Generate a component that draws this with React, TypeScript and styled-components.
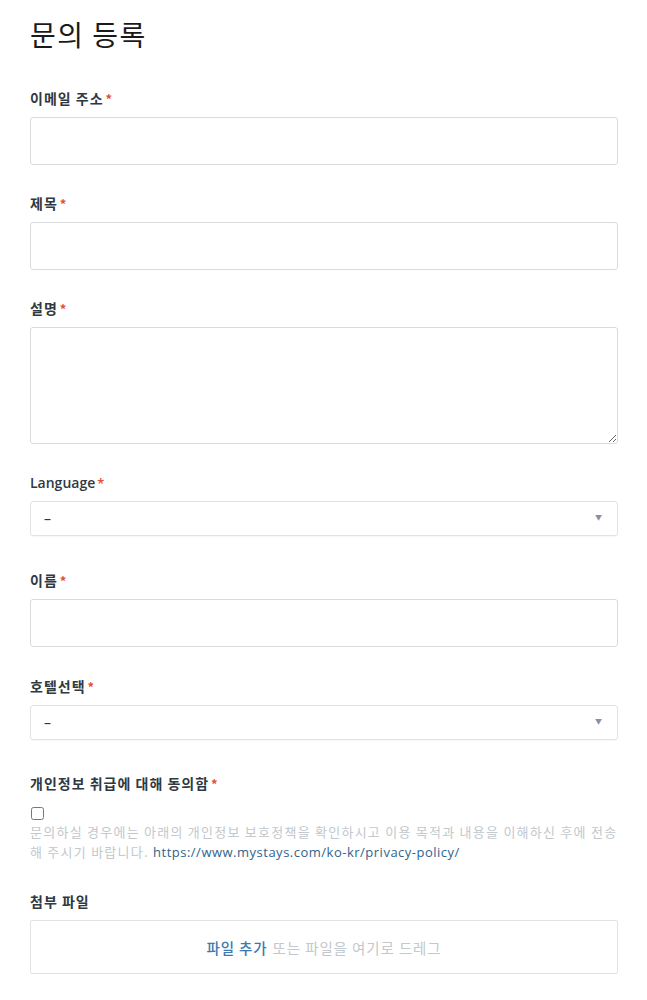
import React from "react";
import styled, { createGlobalStyle } from "styled-components";

const Global = createGlobalStyle`
  html, body { margin: 0; padding: 0; background: #fff; }
  body { font-family: "Noto Sans", "Noto Sans CJK KR", sans-serif; color: #2f3941; }
  * { box-sizing: border-box; }
`;

const Page = styled.div`
  padding: 16px 29px 20px 30px;
  font-family: "Noto Sans", "Noto Sans CJK KR", sans-serif;
`;

const Title = styled.h1`
  margin: 0 0 36px;
  font-size: 28px;
  line-height: 36px;
  font-weight: 400;
  letter-spacing: 1.5px;
  color: #1a1a1a;
  font-family: "Noto Sans CJK KR", sans-serif;
`;

const Form = styled.form`
  display: flex;
  flex-direction: column;
`;

const Field = styled.div<{ $extra?: number }>`
  display: flex;
  flex-direction: column;
  margin-bottom: ${(p) => 28 + (p.$extra ?? 0)}px;
`;

const Label = styled.label`
  display: block;
  height: 20px;
  font-size: 14px;
  line-height: 20px;
  font-weight: 700;
  letter-spacing: 1px;
  color: #2f3941;
  margin-bottom: 9px;
  font-family: "Noto Sans CJK KR", sans-serif;
`;

const LatinLabel = styled(Label)`
  font-family: "Open Sans", "Noto Sans CJK KR", sans-serif;
  font-weight: 600;
  letter-spacing: 0;
  margin-bottom: 8px;
`;

const Star = styled.span`
  color: #e34f32;
  margin-left: 2px;
  font-size: 13px;
  line-height: 0;
`;

const TextInput = styled.input`
  height: 48px;
  width: 100%;
  border: 1px solid #d8dcde;
  border-radius: 3px;
  padding: 0 12px;
  font-size: 14px;
  outline: none;
  background: #fff;
`;

const TextArea = styled.textarea`
  height: 117px;
  width: 100%;
  border: 1px solid #d8dcde;
  border-radius: 3px;
  padding: 10px 12px;
  resize: vertical;
  font-size: 14px;
  outline: none;
  font-family: inherit;
  display: block;
`;

const SelectBox = styled.div`
  height: 35px;
  width: 100%;
  border: 1px solid #e0e3e5;
  border-radius: 3px;
  display: flex;
  align-items: center;
  justify-content: space-between;
  padding: 0 15px 0 13px;
  font-size: 14px;
  color: #2f3941;
  box-shadow: 0 1px 2px rgba(0, 0, 0, 0.04);
`;

const Arrow = styled.span`
  font-size: 7px;
  color: #87929d;
  margin-top: -4px;
`;

const Checkbox = styled.input`
  margin: 5px 0 2px 1px;
  width: 13px;
  height: 13px;
`;

const Hint = styled.p`
  margin: 0;
  font-size: 13px;
  line-height: 20px;
  color: #c2c8cc;
  font-family: "Noto Sans CJK KR", sans-serif;
  letter-spacing: 1.25px;
`;

const HintLink = styled.a`
  color: #30638e;
  text-decoration: none;
  font-family: "Open Sans", "Noto Sans CJK KR", sans-serif;
  letter-spacing: 0.5px;
`;

const DropZone = styled.div`
  height: 54px;
  border: 1px solid #e0e3e5;
  border-radius: 2px;
  display: flex;
  align-items: center;
  justify-content: center;
  font-size: 14.5px;
  letter-spacing: 0.9px;
  font-family: "Noto Sans CJK KR", sans-serif;
  color: #c2c8cc;
  gap: 5px;
`;

const DropLink = styled.span`
  color: #3b7ab0;
  font-weight: 500;
`;

export default function App() {
  return (
    <Page>
      <Global />
      <Title>문의 등록</Title>
      <Form>
        <Field>
          <Label>이메일 주소<Star>*</Star></Label>
          <TextInput type="email" />
        </Field>
        <Field>
          <Label>제목<Star>*</Star></Label>
          <TextInput type="text" />
        </Field>
        <Field $extra={1}>
          <Label>설명<Star>*</Star></Label>
          <TextArea />
        </Field>
        <Field $extra={6}>
          <LatinLabel>Language<Star>*</Star></LatinLabel>
          <SelectBox>
            <span>–</span>
            <Arrow>▼</Arrow>
          </SelectBox>
        </Field>
        <Field $extra={1}>
          <Label>이름<Star>*</Star></Label>
          <TextInput type="text" />
        </Field>
        <Field $extra={5}>
          <Label>호텔선택<Star>*</Star></Label>
          <SelectBox>
            <span>–</span>
            <Arrow>▼</Arrow>
          </SelectBox>
        </Field>
        <Field $extra={1}>
          <Label>개인정보 취급에 대해 동의함<Star>*</Star></Label>
          <Checkbox type="checkbox" />
          <Hint>
            문의하실 경우에는 아래의 개인정보 보호정책을 확인하시고 이용 목적과 내용을 이해하신 후에 전송해 주시기 바랍니다.{" "}
            <HintLink href="#">https://www.mystays.com/ko-kr/privacy-policy/</HintLink>
          </Hint>
        </Field>
        <Field>
          <Label>첨부 파일</Label>
          <DropZone>
            <DropLink>파일 추가</DropLink>
            <span>또는 파일을 여기로 드레그</span>
          </DropZone>
        </Field>
      </Form>
    </Page>
  );
}
